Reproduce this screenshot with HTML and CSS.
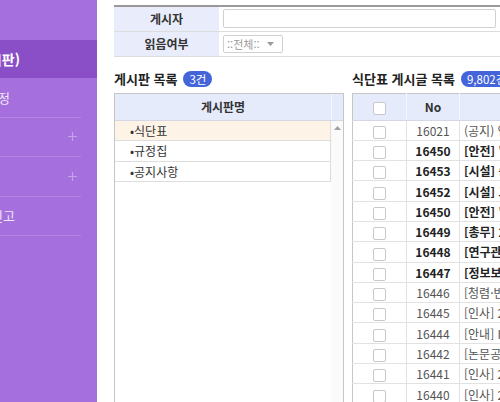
FILE: index.html
```html
<!DOCTYPE html>
<html lang="ko">
<head>
<meta charset="utf-8">
<title>게시판</title>
<link rel="stylesheet" href="styles.css">
</head>
<body>
<div class="app">
  <aside class="sidebar">
    <div class="side-top"></div>
    <div class="side-item active"><span class="side-label strong"><span>전자게시판(일반게시판)</span></span></div>
    <div class="side-item"><span class="side-label"><span>학칙규정</span></span></div>
    <div class="side-item"><span class="side-label"><span></span></span><svg class="plus" width="9" height="9" viewBox="0 0 9 9"><path d="M4.5 0v9M0 4.5h9"/></svg></div>
    <div class="side-item"><span class="side-label"><span></span></span><svg class="plus" width="9" height="9" viewBox="0 0 9 9"><path d="M4.5 0v9M0 4.5h9"/></svg></div>
    <div class="side-item"><span class="side-label wide"><span>부패신고</span></span></div>
  </aside>
  <main class="main">
    <table class="search">
      <tr>
        <th>게시자</th>
        <td><div class="input"></div></td>
      </tr>
      <tr>
        <th>읽음여부</th>
        <td><div class="select"><span>::전체::</span><svg width="7" height="4" viewBox="0 0 7 4"><path d="M0 0h7L3.5 4z"/></svg></div></td>
      </tr>
    </table>
    <div class="panels">
      <section class="board-panel">
        <h2 class="title"><span>게시판 목록</span><span class="badge">3건</span></h2>
        <div class="grid">
          <div class="grid-head">
            <div class="head-name">게시판명</div>
            <div class="head-scroll"></div>
          </div>
          <div class="grid-body">
            <ul class="board-list">
              <li class="selected">•식단표</li>
              <li>•규정집</li>
              <li>•공지사항</li>
            </ul>
            <div class="scrollbar"><svg width="7" height="4" viewBox="0 0 7 4"><path d="M3.5 0L7 4H0z"/></svg></div>
          </div>
        </div>
      </section>
      <section class="post-panel">
        <h2 class="title"><span>식단표 게시글 목록</span><span class="badge">9,802건</span></h2>
        <table class="posts">
          <colgroup><col class="c-chk"><col class="c-no"><col class="c-title"></colgroup>
          <thead>
            <tr><th><span class="chk"></span></th><th>No</th><th>제목</th></tr>
          </thead>
          <tbody>
            <tr><td><span class="chk"></span></td><td>16021</td><td class="t">(공지) 연구실 안전교육 이수 안내</td></tr>
            <tr class="b"><td><span class="chk"></span></td><td>16450</td><td class="t">[안전] '2024년 하반기 안전점검 실시</td></tr>
            <tr class="b"><td><span class="chk"></span></td><td>16453</td><td class="t">[시설] 승강기 정기점검 안내</td></tr>
            <tr class="b"><td><span class="chk"></span></td><td>16452</td><td class="t">[시설] 고압 전기설비 점검</td></tr>
            <tr class="b"><td><span class="chk"></span></td><td>16450</td><td class="t">[안전] '2024년 소방훈련 안내</td></tr>
            <tr class="b"><td><span class="chk"></span></td><td>16449</td><td class="t">[총무] 2024년 연말정산 안내</td></tr>
            <tr class="b"><td><span class="chk"></span></td><td>16448</td><td class="t">[연구관리] 연구비 집행 안내</td></tr>
            <tr class="b"><td><span class="chk"></span></td><td>16447</td><td class="t">[정보보안] 보안점검 실시</td></tr>
            <tr><td><span class="chk"></span></td><td>16446</td><td class="t">[청렴·반부패] 청렴교육 안내</td></tr>
            <tr><td><span class="chk"></span></td><td>16445</td><td class="t">[인사] 2024년 인사발령</td></tr>
            <tr><td><span class="chk"></span></td><td>16444</td><td class="t">[안내] IAEA 국제회의 개최</td></tr>
            <tr><td><span class="chk"></span></td><td>16442</td><td class="t">[논문공모] 우수논문 공모전</td></tr>
            <tr><td><span class="chk"></span></td><td>16441</td><td class="t">[인사] 2024년 채용 공고</td></tr>
            <tr><td><span class="chk"></span></td><td>16440</td><td class="t">[인사] 2024년 승진 안내</td></tr>
          </tbody>
        </table>
      </section>
    </div>
  </main>
</div>
</body>
</html>
```
FILE: styles.css
```css
* { box-sizing: border-box; }
html, body { margin: 0; padding: 0; }
body {
  width: 500px;
  height: 402px;
  overflow: hidden;
  background: #fff;
  font-family: "Noto Sans CJK KR", "Noto Sans", sans-serif;
  font-size: 12px;
  color: #333;
}
.app { display: flex; height: 402px; }

/* sidebar */
.sidebar {
  width: 97px;
  flex: none;
  background: #a56fde;
  overflow: hidden;
}
.side-top { height: 40px; }
.side-item {
  height: 39.5px;
  margin-right: 16px;
  border-bottom: 1px solid rgba(255,255,255,0.16);
  display: flex;
  align-items: center;
  justify-content: space-between;
  color: rgba(255,255,255,0.85);
  font-size: 13px;
}
.side-item.active {
  height: 38px;
  margin-right: 0;
  border-bottom: none;
  background: #8a4ec7;
  color: #fff;
}
.side-label {
  width: 10px;
  display: flex;
  justify-content: flex-end;
  white-space: nowrap;
}
.side-label.strong { width: 20px; font-size: 14px; font-weight: 700; }
.side-label.wide { width: 15px; }
.plus { margin-right: 4px; stroke: rgba(255,255,255,0.35); stroke-width: 1.2; fill: none; }

/* main */
.main {
  flex: 1;
  min-width: 0;
  padding: 5px 0 0 17px;
  overflow: hidden;
}
.search {
  width: 386px;
  border-collapse: collapse;
  border-top: 2px solid #999;
}
.search th, .search td {
  height: 25px;
  border-bottom: 1px solid #ddd;
  padding: 0;
}
.search th {
  width: 105px;
  background: #e9edfb;
  font-weight: 700;
  color: #333;
  text-align: center;
}
.search td { padding: 0 4px; }
.input {
  height: 19px;
  border: 1px solid #d0d0d0;
  border-radius: 2px;
}
.select {
  width: 60px;
  height: 18px;
  border: 1px solid #d0d0d0;
  border-radius: 2px;
  display: flex;
  align-items: center;
  justify-content: space-between;
  padding: 0 8px 0 3px;
  color: #999;
  font-size: 11px;
}
.select svg { fill: #999; }

.panels {
  display: flex;
  gap: 8px;
  margin-top: 12px;
}
.title {
  margin: 0 0 4px;
  height: 20px;
  display: flex;
  align-items: center;
  gap: 6px;
  font-size: 13px;
  font-weight: 700;
  color: #222;
  white-space: nowrap;
}
.badge {
  height: 16px;
  padding: 0 6px;
  border-radius: 8px;
  background: #4464d9;
  color: #fff;
  font-size: 11.5px;
  font-weight: 400;
  line-height: 16px;
}

/* board grid */
.board-panel { width: 230px; flex: none; }
.grid {
  border: 1px solid #c6c6c6;
  border-bottom: none;
  height: 320px;
}
.grid-head {
  display: flex;
  height: 27px;
  background: #e5ebfb;
  border-bottom: 1px solid #d4d8e4;
}
.head-name {
  flex: 1;
  display: flex;
  align-items: center;
  justify-content: center;
  font-weight: 700;
  color: #333;
}
.head-scroll { width: 12px; border-left: 1px solid #f4f6fd; }
.grid-body { display: flex; height: 292px; }
.board-list {
  flex: 1;
  margin: 0;
  padding: 0;
  list-style: none;
}
.board-list li {
  height: 20.5px;
  line-height: 20px;
  padding-left: 15px;
  border-bottom: 1px solid #ddd;
  border-right: 1px solid #ddd;
  color: #333;
}
.board-list li.selected { background: #fdf3e7; }
.scrollbar {
  width: 12px;
  background: #fafafa;
  display: flex;
  justify-content: center;
  padding-top: 5px;
}
.scrollbar svg { fill: #a0a0a0; }

/* posts */
.post-panel { width: 360px; flex: none; }
.posts {
  width: 360px;
  border-collapse: collapse;
  table-layout: fixed;
  border-top: 1px solid #c6c6c6;
  border-left: 1px solid #c6c6c6;
}
.c-chk { width: 54px; }
.c-no { width: 53px; }
.posts th {
  height: 27px;
  background: #e5ebfb;
  font-weight: 700;
  color: #333;
  border-right: 1px solid #f4f6fd;
  border-bottom: 1px solid #d4d8e4;
  padding: 0;
}
.posts td {
  height: 20.3px;
  padding: 0;
  border-right: 1px solid #e2e2e2;
  border-bottom: 1px solid #e2e2e2;
  text-align: center;
  color: #555;
  white-space: nowrap;
  overflow: hidden;
}
.posts td.t { text-align: left; padding-left: 4px; }
.posts tr.b td { font-weight: 700; color: #222; }
.chk {
  display: inline-block;
  width: 13px;
  height: 13px;
  border: 1px solid #c8c8c8;
  border-radius: 2px;
  background: #fff;
  vertical-align: middle;
}
```
